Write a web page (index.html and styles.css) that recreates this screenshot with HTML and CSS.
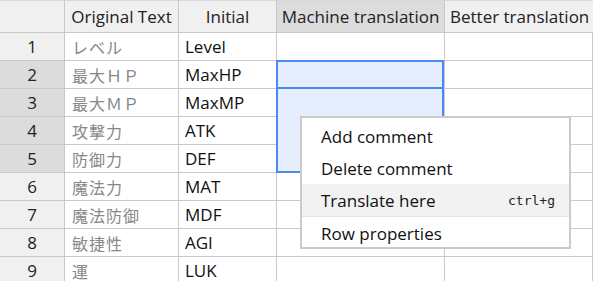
FILE: index.html
```html
<!DOCTYPE html>
<html>
<head>
<meta charset="utf-8">
<link rel="stylesheet" href="styles.css">
</head>
<body>
<div class="sheet">
  <div class="grid">
    <div class="cell hdr corner"></div>
    <div class="cell hdr">Original Text</div>
    <div class="cell hdr">Initial</div>
    <div class="cell hdr hdr-sel">Machine translation</div>
    <div class="cell hdr hdr-last">Better translation</div>

    <div class="cell rn">1</div><div class="cell jp">レベル</div><div class="cell en">Level</div><div class="cell"></div><div class="cell"></div>
    <div class="cell rn rn-sel">2</div><div class="cell jp">最大ＨＰ</div><div class="cell en">MaxHP</div><div class="cell sel"></div><div class="cell"></div>
    <div class="cell rn rn-sel">3</div><div class="cell jp">最大ＭＰ</div><div class="cell en">MaxMP</div><div class="cell sel"></div><div class="cell"></div>
    <div class="cell rn rn-sel">4</div><div class="cell jp">攻撃力</div><div class="cell en">ATK</div><div class="cell sel"></div><div class="cell"></div>
    <div class="cell rn rn-sel">5</div><div class="cell jp">防御力</div><div class="cell en">DEF</div><div class="cell sel"></div><div class="cell"></div>
    <div class="cell rn">6</div><div class="cell jp">魔法力</div><div class="cell en">MAT</div><div class="cell"></div><div class="cell"></div>
    <div class="cell rn">7</div><div class="cell jp">魔法防御</div><div class="cell en">MDF</div><div class="cell"></div><div class="cell"></div>
    <div class="cell rn">8</div><div class="cell jp">敏捷性</div><div class="cell en">AGI</div><div class="cell"></div><div class="cell"></div>
    <div class="cell rn">9</div><div class="cell jp">運</div><div class="cell en">LUK</div><div class="cell"></div><div class="cell"></div>
  </div>
  <div class="sel-range"></div>
  <div class="sel-active"></div>
  <div class="menu">
    <div class="item">Add comment</div>
    <div class="item">Delete comment</div>
    <div class="item item-hover">Translate here<span class="key">ctrl+g</span></div>
    <div class="item item-last">Row properties</div>
  </div>
</div>
</body>
</html>
```
FILE: styles.css
```css
html, body {
  margin: 0;
  padding: 0;
  background: #ffffff;
  overflow: hidden;
}
body {
  font-family: "Open Sans", "Noto Sans", sans-serif;
  font-size: 17px;
  color: #111;
}
.sheet {
  position: relative;
  width: 593px;
  height: 281px;
  overflow: hidden;
}
.grid {
  display: grid;
  grid-template-columns: 65px 114px 98px 168px 148px;
  grid-template-rows: 33px repeat(9, 28px);
}
.cell {
  box-sizing: border-box;
  border-right: 1px solid #c9c9c9;
  border-bottom: 1px solid #c9c9c9;
  display: flex;
  align-items: center;
  white-space: nowrap;
  overflow: hidden;
  line-height: 1;
}
.hdr {
  background: #f0f0f0;
  justify-content: center;
  color: #222;
  border-top: 1px solid #d8d8d8;
}
.hdr-sel {
  background: #dcdcdc;
}
.hdr-last {
  justify-content: flex-start;
  padding-left: 5px;
  border-right: none;
}
.rn {
  background: #f0f0f0;
  justify-content: center;
  color: #222;
}
.rn-sel {
  background: #dcdcdc;
}
.jp {
  padding-left: 7px;
  color: #888888;
  font-family: "Noto Sans CJK JP", sans-serif;
  font-size: 16px;
  font-weight: 400;
  letter-spacing: 1px;
}
.en {
  padding-left: 6px;
  color: #111;
}
.sel {
  background: #e6eefd;
  border-bottom-color: #e6eefd;
}
.sel-range {
  position: absolute;
  left: 276px;
  top: 60px;
  width: 168px;
  height: 113px;
  box-sizing: border-box;
  border: 2px solid #4a8af4;
}
.sel-active {
  position: absolute;
  left: 276px;
  top: 60px;
  width: 168px;
  height: 29px;
  box-sizing: border-box;
  border: 2px solid #4a8af4;
}
.menu {
  position: absolute;
  left: 300px;
  top: 116px;
  width: 271px;
  box-sizing: border-box;
  background: #fff;
  border: 2px solid #cbcbcb;
  padding: 2px 0 0 0;
}
.item {
  height: 32px;
  display: flex;
  align-items: center;
  padding: 0 14px 0 19px;
  color: #111;
  box-sizing: border-box;
}
.item-hover {
  background: #f2f2f2;
  justify-content: space-between;
  border-bottom: 1px solid #e4e4e4;
  height: 33px;
}
.item-last {
  height: 30px;
  padding-top: 2px;
}
.key {
  font-family: "DejaVu Sans Mono", "Liberation Mono", monospace;
  font-size: 13px;
  color: #222;
}
```
